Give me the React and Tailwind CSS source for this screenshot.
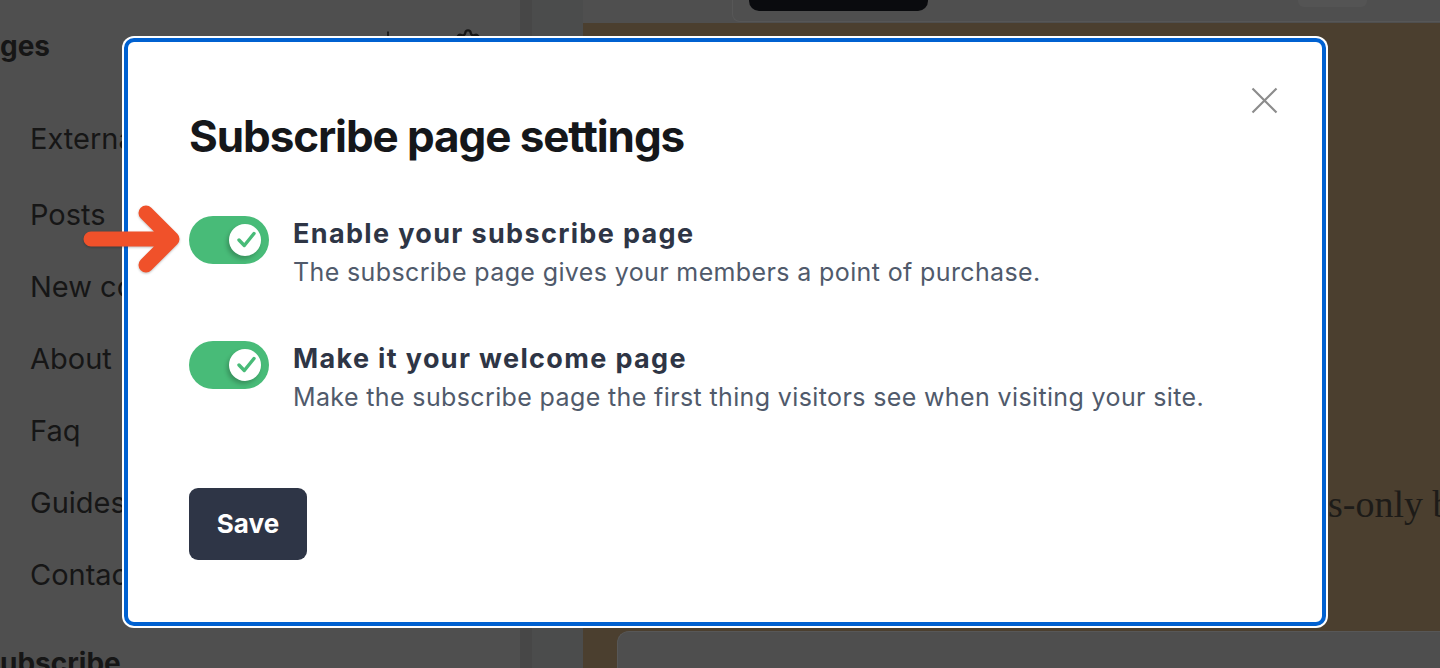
import React from "react";
import { Plus, Settings } from "lucide-react";

const sidebarItems = ["External", "Posts", "New content", "About", "Faq", "Guides", "Contact"];

const Toggle = () => (
  <div className="flex h-[48px] w-[80px] shrink-0 items-center justify-end rounded-full bg-[#48bb78] pr-[8px]">
    <div className="h-[32px] w-[32px] rounded-full bg-white shadow-[-2px_3px_4px_rgba(0,0,0,0.22)]">
      <svg viewBox="0 0 32 32" className="h-[32px] w-[32px]">
        <path d="M10 16 L15.3 21.5 L25 9.5" fill="none" stroke="#48bb78" strokeWidth="3.4" strokeLinecap="round" strokeLinejoin="round" />
      </svg>
    </div>
  </div>
);

const SettingRow = ({ title, description }) => (
  <div className="flex items-start gap-[24px]">
    <Toggle />
    <div className="mt-[4px] flex flex-col">
      <h3 className="text-[27px] leading-none font-bold tracking-[0.05em] text-[#2e3545]">{title}</h3>
      <p className="mt-[13px] text-[25px] leading-none tracking-[0.015em] text-[#505a6b]">{description}</p>
    </div>
  </div>
);

export default function App() {
  return (
    <div className="relative h-[668px] w-[1440px] overflow-hidden bg-[#4f4f4f] font-['Inter',sans-serif]">
      {/* page behind the overlay */}
      <div className="flex h-full">
        <aside className="flex w-[520px] shrink-0 flex-col overflow-hidden text-[#161616]">
          <div className="mt-[32px] flex h-[28px] items-start justify-between pr-[38px]">
            <span className="text-[28px] leading-none font-bold">ges</span>
            <div className="-mt-[4px] flex items-start gap-[56px]">
              <Plus size={20} strokeWidth={2} />
              <Settings size={28} strokeWidth={2} />
            </div>
          </div>
          <ul className="mt-[43px] flex flex-col">
            {sidebarItems.map((item, i) => (
              <li
                key={item}
                className={i === 0 ? "mb-[4px] flex h-[72px] items-center pl-[30px] text-[29px] whitespace-nowrap" : "flex h-[72px] items-center pl-[30px] text-[29px] whitespace-nowrap"}
              >
                {item}
              </li>
            ))}
          </ul>
          <span className="mt-[38px] text-[28px] leading-none font-bold">ubscribe</span>
        </aside>
        <div className="w-[12px] shrink-0 bg-[#474747]" />
        <div className="w-[51px] shrink-0 bg-[#4b4c4c]" />
        <main className="flex min-w-0 flex-1 flex-col">
          <div className="flex h-[23px] bg-[#4f4f4f]">
            <div className="ml-[149px] flex h-[22px] flex-1 items-start rounded-bl-[8px] border-b border-l border-[#575757]">
              <div className="ml-[16px] h-[11px] w-[179px] rounded-b-[10px] bg-[#0a0b0e]" />
              <div className="ml-[370px] h-[7px] w-[69px] rounded-b-[6px] bg-[#545454]" />
            </div>
          </div>
          <div className="flex-1 overflow-hidden bg-[#4b3f2f] pt-[462px] pl-[745px]">
            <p className="font-['Liberation_Serif',serif] text-[38px] leading-none whitespace-nowrap text-[#1d1b18]">s-only benefits</p>
          </div>
          <div className="flex h-[37px] bg-[#4b3f2f] pl-[34px]">
            <div className="flex-1 rounded-tl-[12px] border-t border-l border-[#575757] bg-[#4e4e4e]" />
          </div>
        </main>
      </div>

      {/* modal */}
      <div className="absolute top-[36px] left-[122px] h-[592px] w-[1206px] rounded-[12px] bg-white p-[2px]">
        <div className="relative h-full rounded-[10px] border-4 border-[#0061d1] bg-white pt-[72px] pl-[61px]">
          <button className="absolute top-[45px] right-[44px] h-[27px] w-[27px]" aria-label="Close">
            <svg viewBox="0 0 27 27" className="h-[27px] w-[27px]">
              <path d="M1.5 1.5 L25.5 25.5 M25.5 1.5 L1.5 25.5" stroke="#8c8c8c" strokeWidth="2.2" />
            </svg>
          </button>
          <h2 className="text-[44px] leading-none font-bold tracking-[-0.025em] text-[#15171a]">Subscribe page settings</h2>
          <div className="mt-[58px] flex flex-col gap-[56px]">
            <SettingRow title="Enable your subscribe page" description="The subscribe page gives your members a point of purchase." />
            <SettingRow title="Make it your welcome page" description="Make the subscribe page the first thing visitors see when visiting your site." />
          </div>
          <button className="mt-[78px] flex h-[72px] w-[118px] items-center justify-center rounded-[9px] bg-[#2e3546] text-[26px] leading-none font-bold text-white">
            Save
          </button>
        </div>
      </div>

      {/* annotation arrow */}
      <svg className="absolute top-[196px] left-[76px] h-[84px] w-[116px] drop-shadow-[0_1px_1px_rgba(0,0,0,0.25)]" viewBox="0 0 116 84">
        <path d="M15 43 L96 43 M70 17 L96 43 L70 69" fill="none" stroke="#f0512a" strokeWidth="15" strokeLinecap="round" strokeLinejoin="round" />
      </svg>
    </div>
  );
}
